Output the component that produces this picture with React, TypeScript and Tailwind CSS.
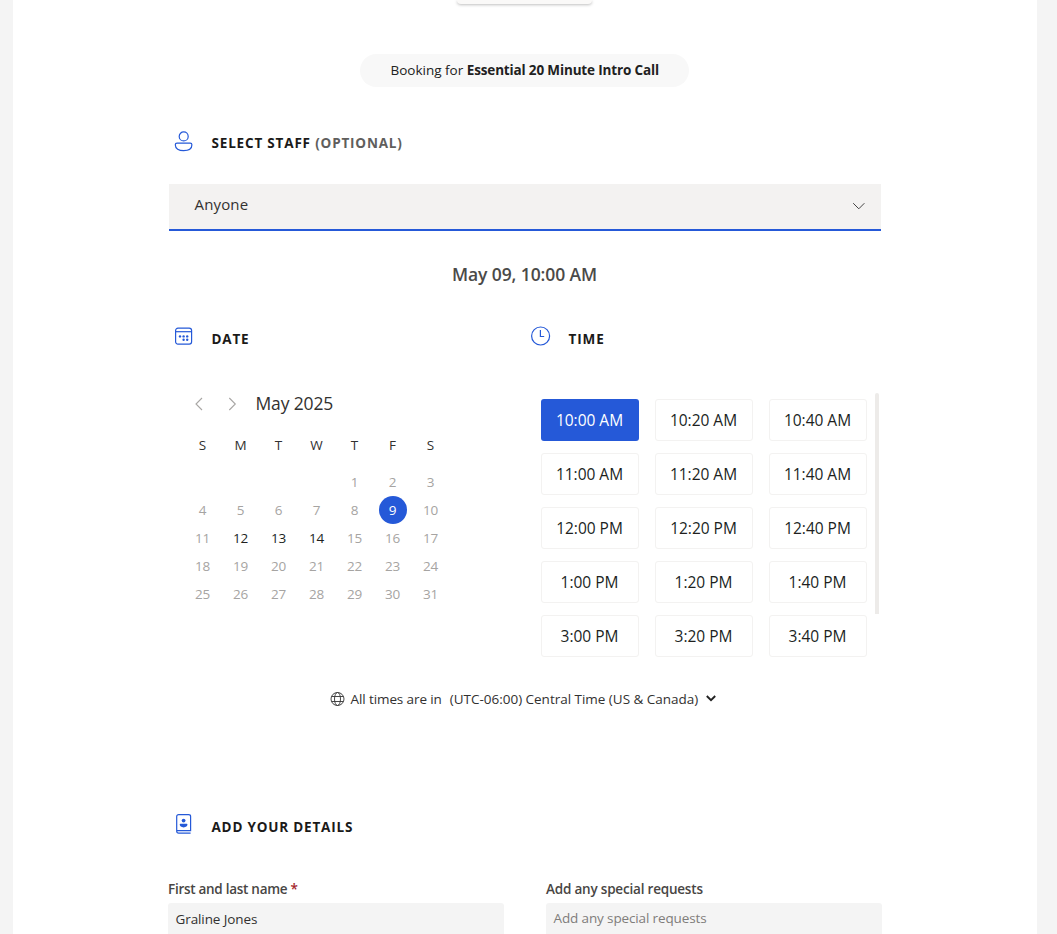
import React from "react";

const weekdays = ["S", "M", "T", "W", "T", "F", "S"];
const blanks = [0, 1, 2, 3];
const days = Array.from({ length: 31 }, (_, i) => i + 1);
const available = [12, 13, 14];
const slots = [
  "10:00 AM", "10:20 AM", "10:40 AM",
  "11:00 AM", "11:20 AM", "11:40 AM",
  "12:00 PM", "12:20 PM", "12:40 PM",
  "1:00 PM", "1:20 PM", "1:40 PM",
  "3:00 PM", "3:20 PM", "3:40 PM",
];

function PersonIcon() {
  return (
    <svg width="20" height="22" viewBox="0 0 20 22" fill="none" stroke="#2559d8" strokeWidth="1.2">
      <circle cx="9.7" cy="5.4" r="4.5" />
      <path d="M3 12.2H16.2Q17.9 12.2 17.9 13.8C17.9 17.8 14.4 19.7 9.6 19.7S1.3 17.8 1.3 13.8Q1.3 12.2 3 12.2Z" />
    </svg>
  );
}

function CalendarIcon() {
  return (
    <svg width="20" height="20" viewBox="0 0 20 20" fill="none" stroke="#2559d8" strokeWidth="1.2">
      <rect x="1.6" y="2.1" width="16" height="16" rx="2.4" />
      <path d="M1.6 5.7H17.6" />
      <g fill="#2559d8" stroke="none">
        <circle cx="6" cy="10.4" r="1.2" />
        <circle cx="9.6" cy="10.4" r="1.2" />
        <circle cx="13.2" cy="10.4" r="1.2" />
        <circle cx="9.6" cy="13.8" r="1.2" />
        <circle cx="13.2" cy="13.8" r="1.2" />
      </g>
    </svg>
  );
}

function ClockIcon() {
  return (
    <svg width="20" height="20" viewBox="0 0 20 20" fill="none" stroke="#2559d8" strokeWidth="1.2">
      <circle cx="9.6" cy="10" r="9" />
      <path d="M9.4 4V10.5H13.2" />
    </svg>
  );
}

function ContactIcon() {
  return (
    <svg width="17" height="20" viewBox="0 0 17 20" fill="none" stroke="#2559d8" strokeWidth="1.2">
      <path d="M15.6 19.2H3.7Q1.7 19.2 1.7 17.2V2.5Q1.7 0.7 3.7 0.7H13.6Q15.6 0.7 15.6 2.5V16.6H1.8" />
      <circle cx="8.6" cy="6.6" r="1.9" fill="#2559d8" stroke="none" />
      <path d="M5.4 9.8H11.8Q12.4 9.8 12.4 10.6C12.4 12.4 10.9 13.4 8.6 13.4S4.8 12.4 4.8 10.6Q4.8 9.8 5.4 9.8Z" fill="#2559d8" stroke="none" />
    </svg>
  );
}

function GlobeIcon() {
  return (
    <svg width="15" height="14" viewBox="0 0 15 14" fill="none" stroke="#333" strokeWidth="0.9">
      <circle cx="7.5" cy="7" r="6.5" />
      <ellipse cx="7.5" cy="7" rx="3" ry="6.5" />
      <path d="M1.5 4.5H13.5M1.5 9.5H13.5" />
    </svg>
  );
}

export default function App() {
  return (
    <div className="flex h-[934px] w-[1057px] justify-start overflow-hidden bg-[#f4f4f4] pl-[13px] font-['Open_Sans',sans-serif] text-[#323130]">
      <main className="flex h-[934px] w-[1024px] flex-col overflow-hidden bg-white pl-[155px]">
        <div className="ml-[289px] h-[4px] w-[135px] shrink-0 rounded-b-[4px] bg-[#faf9f8] shadow-[0_1px_3px_rgba(0,0,0,0.25)]" />

        <div className="mt-[50px] ml-[192px] flex h-[33px] w-[329px] shrink-0 items-center rounded-full bg-[#f8f8f8] pl-[30.5px] text-[13.5px] whitespace-pre text-[#212121]">
          <span>Booking for </span>
          <span className="font-bold tracking-[-0.15px]">Essential 20 Minute Intro Call</span>
        </div>

        <div className="mt-[43px] flex h-[26px] shrink-0 items-center pl-[6px]">
          <div className="-mt-[3px] w-[37.5px]"><PersonIcon /></div>
          <h2 className="text-[13.5px] font-bold tracking-[0.82px] whitespace-pre text-[#1b1a19]">
            SELECT STAFF <span className="text-[#605e5c]">(OPTIONAL)</span>
          </h2>
        </div>

        <div className="mt-[28px] ml-[1px] flex h-[47px] w-[712px] shrink-0 items-center justify-between border-b-2 border-[#2559d8] bg-[#f3f2f1] pr-[16px] pb-[3px] pl-[25.5px]">
          <span className="-mt-[2px] text-[15px] tracking-[0.15px]">Anyone</span>
          <svg className="mt-[2px]" width="13" height="8" viewBox="0 0 13 8" fill="none" stroke="#444" strokeWidth="1">
            <path d="M1.2 1.2L6.8 6.8L12.4 1.2" />
          </svg>
        </div>

        <div className="mt-[28px] flex h-[30px] w-[713px] shrink-0 items-center justify-center text-[17.5px] font-semibold tracking-[-0.1px] text-[#4b4a48]">
          <span>May 09, 10:00 AM</span>
        </div>

        <div className="mt-[37px] flex h-[340px] shrink-0">
          <section className="w-[357px]">
            <div className="flex h-[26px] items-center pl-[6px]">
              <div className="-mt-[6px] w-[37.5px]"><CalendarIcon /></div>
              <h2 className="text-[13.5px] font-bold tracking-[0.8px] text-[#1b1a19]">DATE</h2>
            </div>
            <div className="mt-[40px] flex h-[24px] items-center pl-[27px]">
              <svg width="9" height="14" viewBox="0 0 9 14" fill="none" stroke="#a8a6a4" strokeWidth="1.1"><path d="M7 1L1 7L7 13" /></svg>
              <svg className="ml-[24px]" width="9" height="14" viewBox="0 0 9 14" fill="none" stroke="#a8a6a4" strokeWidth="1.1"><path d="M1.3 1L7.3 7L1.3 13" /></svg>
              <span className="-mt-[2px] ml-[18.5px] text-[17.5px] tracking-[-0.15px]">May 2025</span>
            </div>
            <div className="mt-[15px] ml-[15.5px] grid w-[266px] grid-cols-7 text-center text-[13.5px]">
              {weekdays.map((d, i) => <span key={i} className="leading-[28px]">{d}</span>)}
            </div>
            <div className="mt-[9px] ml-[16px] grid w-[266px] grid-cols-7 justify-items-center text-[13.5px] tracking-[-0.1px]">
              {blanks.map((b) => <span key={"b" + b} />)}
              {days.map((d) => (
                <span
                  key={d}
                  className={
                    d === 9
                      ? "flex h-[28px] w-[28px] items-center justify-center rounded-full bg-[#2559d8] pr-[1px] font-medium text-white"
                      : available.includes(d)
                        ? "flex h-[28px] w-[28px] items-center justify-center pr-[1px] text-[#201f1e]"
                        : "flex h-[28px] w-[28px] items-center justify-center pr-[1px] text-[#a6a4a2]"
                  }
                >
                  {d}
                </span>
              ))}
            </div>
          </section>

          <section className="w-[360px]">
            <div className="flex h-[26px] items-center pl-[6px]">
              <div className="-mt-[6px] w-[37.5px]"><ClockIcon /></div>
              <h2 className="text-[13.5px] font-bold tracking-[0.9px] text-[#1b1a19]">TIME</h2>
            </div>
            <div className="mt-[41px] flex pl-[16px]">
              <div className="mt-[6px] grid grid-cols-[98px_98px_98px] gap-x-[16px] gap-y-[12px]">
                {slots.map((s, i) => (
                  <button
                    key={s}
                    className={
                      i === 0
                        ? "h-[42px] rounded-[3px] bg-[#2559d8] pt-[2px] pr-[1px] text-[15.5px] tracking-[-0.02px] text-white"
                        : "h-[42px] rounded-[3px] border border-[#f3f2f1] bg-white pt-[2px] pr-[1px] text-[15.5px] tracking-[-0.02px] text-[#201f1e]"
                    }
                  >
                    {s}
                  </button>
                ))}
              </div>
              <div className="ml-[8px] h-[221px] w-[4px] rounded-t-[2px] bg-[#edebe9]" />
            </div>
          </section>
        </div>

        <div className="mt-[23px] flex h-[20px] shrink-0 items-center pl-[162px] text-[13.5px] whitespace-pre">
          <GlobeIcon />
          <span className="ml-[5.5px] tracking-[-0.1px]">All times are in</span>
          <span className="ml-[8px] tracking-[-0.02px]">(UTC-06:00) Central Time (US &amp; Canada)</span>
          <svg className="-mt-[1px] ml-[8px]" width="10" height="7" viewBox="0 0 10 7" fill="none" stroke="#222" strokeWidth="1.9"><path d="M0.8 1L5 5.2L9.2 1" /></svg>
        </div>

        <div className="mt-[105px] flex h-[26px] shrink-0 items-center pl-[7px]">
          <div className="-mt-[6px] w-[36.5px]"><ContactIcon /></div>
          <h2 className="text-[13.5px] font-bold tracking-[0.8px] text-[#1b1a19]">ADD YOUR DETAILS</h2>
        </div>

        <div className="mt-[39px] flex shrink-0 gap-[42px] text-[13.5px]">
          <div className="w-[336px]">
            <label className="block h-[24px] leading-[21px] font-semibold tracking-[-0.28px] text-[#484644]">First and last name <span className="text-[#a4262c]">*</span></label>
            <div className="h-[40px] rounded-[3px] bg-[#f4f4f4] pl-[7.5px] leading-[32px] tracking-[-0.1px]">Graline Jones</div>
          </div>
          <div className="w-[336px]">
            <label className="block h-[24px] leading-[21px] font-semibold tracking-[-0.2px] text-[#484644]">Add any special requests</label>
            <div className="h-[40px] rounded-[3px] bg-[#f4f4f4] pl-[7.5px] leading-[30px] tracking-[-0.13px] text-[#7f7d7b]">Add any special requests</div>
          </div>
        </div>
      </main>
    </div>
  );
}
